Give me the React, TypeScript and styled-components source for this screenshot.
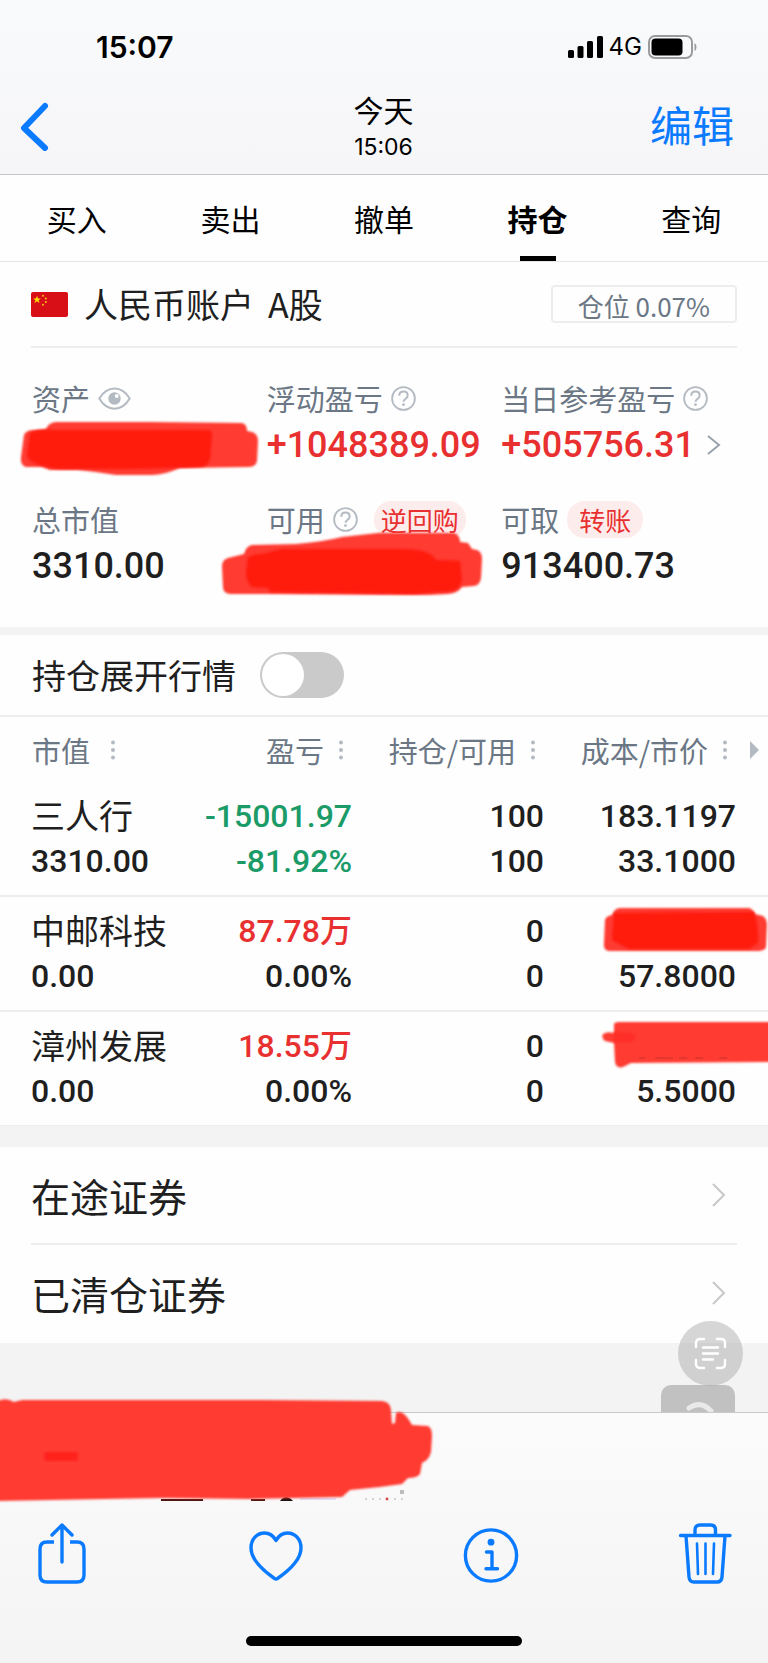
import React from 'react';
import styled, { createGlobalStyle } from 'styled-components';

const cjk = '"Noto Sans CJK SC", sans-serif';
const numeric = 'Roboto, "Noto Sans CJK SC", sans-serif';
const system = 'Inter, "Noto Sans CJK SC", sans-serif';

const color = {
  ink: '#1f1f1f',
  muted: '#6b7785',
  faint: '#b4bac2',
  line: '#ededee',
  band: '#f3f3f3',
  rise: '#e93030',
  fall: '#1b9b68',
  blue: '#0a7aff',
};

type Tone = 'ink' | 'rise' | 'fall';

const GlobalStyle = createGlobalStyle`
  * { box-sizing: border-box; }
  body { margin: 0; background: #fff; color: ${color.ink}; font-family: ${cjk}; }
  button { border: 0; margin: 0; padding: 0; background: none; color: inherit; font: inherit; cursor: pointer; }
  svg { display: block; }
`;

const Page = styled.div`
  display: flex;
  flex-direction: column;
  min-height: 100vh;
  overflow: hidden;
  background: #fefefe;
`;

/* ---------- header ---------- */

const Header = styled.header`
  background: linear-gradient(#f9fafc, #f6f6f8);
  border-bottom: 1px solid #c4c5c8;
  color: #000;
  font-family: ${system};
`;

const StatusBar = styled.div`
  display: flex;
  justify-content: space-between;
  align-items: center;
  padding: 31px 71px 12px 96px;
  line-height: 32px;
`;

const Clock = styled.span`
  font-size: 30px;
  font-weight: 600;
`;

const Signals = styled.div`
  display: flex;
  align-items: center;
  gap: 6px;
  font-size: 24px;
`;

const NavBar = styled.div`
  display: grid;
  grid-template-columns: 1fr auto 1fr;
  align-items: center;
  padding: 18px 34px 15px 19px;
`;

const BackButton = styled.button`
  justify-self: start;
`;

const EditButton = styled.button`
  justify-self: end;
  padding-top: 2px;
  color: ${color.blue};
  font-size: 42px;
  line-height: 48px;
`;

const NavTitle = styled.div`
  display: flex;
  flex-direction: column;
  align-items: center;
  gap: 6px;
  padding-left: 14px;
`;

const Day = styled.h1`
  margin: 0;
  font-size: 30px;
  font-weight: 400;
  line-height: 36px;
`;

const Time = styled.span`
  font-size: 23px;
  line-height: 24px;
`;

/* ---------- tabs ---------- */

const Tabs = styled.nav`
  display: grid;
  grid-template-columns: repeat(5, 1fr);
  border-bottom: 1px solid #e4e5e6;
`;

const Tab = styled.button<{ $active?: boolean }>`
  position: relative;
  padding: 25px 0;
  color: #000;
  font-size: 30px;
  font-weight: ${(p) => (p.$active ? 700 : 400)};
  line-height: 36px;

  &::after {
    content: '';
    display: ${(p) => (p.$active ? 'block' : 'none')};
    position: absolute;
    bottom: 0;
    left: 50%;
    width: 36px;
    height: 5px;
    margin-left: -18px;
    background: #000;
  }
`;

/* ---------- account ---------- */

const AccountHead = styled.section`
  display: flex;
  align-items: center;
  margin: 0 31px;
  padding: 23px 0;
  border-bottom: 2px solid ${color.line};
`;

const AccountName = styled.h2`
  display: flex;
  flex: 1;
  gap: 14px;
  margin: 0 0 0 16px;
  font-size: 34px;
  font-weight: 400;
  line-height: 38px;
`;

const PositionButton = styled.button`
  padding: 3px 25px 0;
  border: 2px solid ${color.line};
  border-radius: 4px;
  color: ${color.muted};
  font-size: 26px;
  line-height: 31px;
`;

const Summary = styled.dl`
  display: grid;
  grid-template-columns: repeat(3, 1fr);
  row-gap: 38px;
  margin: 0;
  padding: 34px 32px 41px;
`;

const Metric = styled.div`
  position: relative;
  display: flex;
  flex-direction: column;
  gap: 11px;
  min-width: 0;
`;

const MetricLabel = styled.dt`
  display: flex;
  align-items: center;
  gap: 8px;
  height: 32px;
  color: ${color.muted};
  font-size: 29px;
  line-height: 32px;
  white-space: nowrap;
`;

const MetricValue = styled.dd<{ $tone?: Tone }>`
  display: flex;
  align-items: center;
  gap: 12px;
  height: 40px;
  margin: 0;
  color: ${(p) => color[p.$tone ?? 'ink']};
  font-family: ${numeric};
  font-size: 36px;
  font-weight: 500;
  line-height: 40px;
  white-space: nowrap;
`;

const Pill = styled.button<{ $tight?: boolean }>`
  padding: 0 ${(p) => (p.$tight ? 7 : 12)}px;
  margin-left: ${(p) => (p.$tight ? 8 : 0)}px;
  border-radius: 18px;
  background: #fdecec;
  color: ${color.rise};
  font-size: 26px;
  line-height: 37px;
`;

const Mark = styled.svg<{ $x: number; $y: number }>`
  position: absolute;
  left: ${(p) => p.$x}px;
  top: ${(p) => p.$y}px;
  overflow: visible;
  pointer-events: none;
`;

/* ---------- holdings ---------- */

const Band = styled.div<{ $size: number }>`
  height: ${(p) => p.$size}px;
  background: ${color.band};
`;

const ExpandRow = styled.label`
  display: flex;
  align-items: center;
  gap: 24px;
  padding: 17px 32px;
  border-bottom: 2px solid ${color.line};
  font-size: 34px;
  line-height: 46px;
`;

const Switch = styled.input`
  appearance: none;
  width: 84px;
  height: 46px;
  margin: 0;
  padding: 2px;
  border-radius: 23px;
  background: #cacaca;

  &::before {
    content: '';
    display: block;
    width: 42px;
    height: 42px;
    border-radius: 50%;
    background: #fff;
  }

  &:checked::before {
    margin-left: 38px;
  }
`;

const Holdings = styled.table`
  width: 100%;
  border-collapse: separate;
  border-spacing: 0;
  table-layout: fixed;
`;

const HeadCell = styled.th<{ $first?: boolean }>`
  height: 65px;
  padding: 0 ${(p) => (p.$first ? 0 : 9)}px 0 ${(p) => (p.$first ? 32 : 0)}px;
  color: ${color.muted};
  font-size: 29px;
  font-weight: 400;
  line-height: 32px;
`;

const HeadLabel = styled.span<{ $first?: boolean }>`
  display: flex;
  align-items: center;
  justify-content: ${(p) => (p.$first ? 'flex-start' : 'flex-end')};
  gap: ${(p) => (p.$first ? 21 : 15)}px;
  white-space: nowrap;
`;

const Cell = styled.td<{ $first?: boolean }>`
  position: relative;
  padding: 12px 0 11px ${(p) => (p.$first ? 31 : 0)}px;
  border-bottom: 2px solid ${color.line};
  font-family: ${numeric};
  font-size: 32px;
  font-weight: 500;
  text-align: ${(p) => (p.$first ? 'left' : 'right')};

  tr:last-child > & {
    border-bottom-width: 1px;
  }
`;

const Line = styled.div<{ $tone?: Tone }>`
  height: 45px;
  color: ${(p) => color[p.$tone ?? 'ink']};
  line-height: 45px;
  white-space: nowrap;
`;

const StockName = styled(Line)`
  font-family: ${cjk};
  font-size: 34px;
  font-weight: 400;
  line-height: 42px;
`;

/* ---------- links ---------- */

const LinkRow = styled.a`
  display: flex;
  align-items: center;
  justify-content: space-between;
  margin: 0 31px;
  padding: 24px 11px 24px 0;
  color: ${color.ink};
  font-size: 39px;
  line-height: 48px;
  text-decoration: none;

  & + & {
    padding-bottom: 26px;
    border-top: 2px solid ${color.line};
  }
`;

const Tail = styled.div`
  position: relative;
  flex: 1;
  min-height: 68px;
  background: ${color.band};
`;

const ScanButton = styled.button`
  position: absolute;
  top: -22px;
  right: 25px;
  padding: 16px;
  border-radius: 50%;
  background: rgba(160, 160, 160, 0.42);
`;

const HiddenTab = styled.div`
  position: absolute;
  right: 33px;
  bottom: 0;
  width: 74px;
  height: 27px;
  overflow: hidden;
  border-radius: 10px 10px 0 0;
  background: #c1c1c1;
`;

/* ---------- toolbar ---------- */

const Toolbar = styled.footer`
  position: relative;
  padding: 110px 31px 17px;
  border-top: 1px solid #c8c8c8;
  background: linear-gradient(#fbfbfb, #f7f7f8 60%, #f4f4f5);
`;

const Actions = styled.div`
  display: flex;
  justify-content: space-between;
`;

const HomeBar = styled.div`
  width: 39%;
  height: 10px;
  margin: 52px auto 0;
  border-radius: 5px;
  background: #000;
`;

/* ---------- drawings ---------- */

const Help = () => (
  <svg width="25" height="25" viewBox="0 0 25 25" fill="none" stroke={color.faint} strokeWidth="1.8">
    <circle cx="12.5" cy="12.5" r="11.4" />
    <path d="M8.3 9.8c0-2.5 1.8-4.2 4.2-4.2s4.2 1.6 4.2 3.9c0 3.2-4.2 3.2-4.2 6.3" strokeWidth="2" />
    <circle cx="12.5" cy="18.6" r="1.4" fill={color.faint} stroke="none" />
  </svg>
);

const Eye = () => (
  <svg width="33" height="23" viewBox="0 0 33 23" fill="none">
    <path d="M1.3 11.5C9-2 24-2 31.7 11.5 24 25 9 25 1.3 11.5z" stroke={color.faint} strokeWidth="2" />
    <circle cx="16.5" cy="11.5" r="6.2" fill={color.faint} />
    <circle cx="18.8" cy="9" r="2" fill="#fefefe" />
  </svg>
);

const Chevron = ({ w, h, stroke, thick }: { w: number; h: number; stroke: string; thick: number }) => (
  <svg width={w} height={h} viewBox={`0 0 ${w} ${h}`} fill="none" stroke={stroke} strokeWidth={thick}>
    <path d={`M1 1L${w - 2} ${h / 2}L1 ${h - 1}`} />
  </svg>
);

const Dots = () => (
  <svg width="4" height="20" viewBox="0 0 4 20" fill={color.faint}>
    <circle cx="2" cy="2.5" r="2" />
    <circle cx="2" cy="10" r="2" />
    <circle cx="2" cy="17.5" r="2" />
  </svg>
);

const Flag = () => (
  <svg width="37" height="25" viewBox="0 0 37 25">
    <rect width="37" height="25" rx="2" fill="#d80f17" />
    <path d="M6 3.8l1 2.7h2.9L7.6 8.2l.9 2.8L6 9.3 3.5 11l.9-2.8L2.1 6.5H5z" fill="#ffe100" />
    <g fill="#f5c518">
      <circle cx="12" cy="3.8" r="1" />
      <circle cx="14.8" cy="6.5" r="1" />
      <circle cx="14.8" cy="10" r="1" />
      <circle cx="12" cy="12.8" r="1" />
    </g>
  </svg>
);

const soft = { filter: 'url(#soft)' };

const BlurDefs = () => (
  <svg width="0" height="0" style={{ position: 'absolute' }} aria-hidden="true">
    <filter id="soft" x="-5%" y="-10%" width="110%" height="120%">
      <feGaussianBlur stdDeviation="1.1" />
    </filter>
  </svg>
);

const AssetMark = () => (
  <Mark $x={-12} $y={39} width="240" height="56" viewBox="0 0 240 56" aria-hidden="true">
    <path {...soft} d="M26 8Q28 2 36 1L130 1 222 2Q227 3 227 10L232 11Q238 13 238 20L237 40Q236 46 228 46L160 47Q144 54 132 54L96 54Q70 50 58 49L30 49 22 46 6 46Q0 44 1 36L4 14Q6 9 14 9z" fill="#ff3b30" />
    <path {...soft} d="M10 12Q18 8 34 9L188 9Q193 10 192 16L190 38Q188 45 180 46L110 48 40 48Q8 44 7 34z" fill="#ff1a0e" />
  </Mark>
);

const AvailableMark = () => (
  <Mark $x={-45} $y={29} width="262" height="66" viewBox="0 0 262 66" aria-hidden="true">
    <path {...soft} d="M0 34Q0 28 6 26L22 22Q24 14 30 13L74 12Q100 10 120 5L156 1 232 1Q238 3 238 10L246 11 250 17 255 18Q260 20 260 27L259 46Q258 53 252 54L240 55Q236 61 226 62L206 63 44 62 8 62Q1 61 1 55z" fill="#ff3b30" />
    <path {...soft} d="M60 17L180 17Q208 17 214 28L238 29 240 48Q238 58 228 59L190 62 48 60 46 56 30 55Q24 50 24 40L26 26Q30 22 40 22z" fill="#ff1a0e" />
  </Mark>
);

const CostMark = () => (
  <Mark $x={61} $y={10} width="163" height="46" viewBox="0 0 163 46" aria-hidden="true">
    <path {...soft} d="M8 6Q10 1 16 1L144 1Q148 2 150 7L158 9Q162 12 162 18L161 40Q160 44 152 44L4 44Q-2 43 -1 36L0 13Q1 9 7 8z" fill="#ff3b30" />
    <path {...soft} d="M9 6L149 5Q154 20 153 36L144 42 24 42 7 33z" fill="#ff1a0e" />
  </Mark>
);

const SecondCostMark = () => (
  <Mark $x={57} $y={8} width="170" height="50" viewBox="0 0 170 50" aria-hidden="true">
    <path {...soft} d="M13 4Q14 2 18 2L172 2 172 42 30 43 22 47Q15 49 14 42L13 23 4 21Q0 18 2 14 6 11 13 13z" fill="#ff3b30" />
    <path {...soft} d="M13 12L30 13Q36 14 34 20 28 24 13 22z" fill="#ff2f25" />
    <path d="M38 38h6M54 38h18M78 38h8M94 38h8M118 38h8" stroke="#e2372f" strokeWidth="2" />
  </Mark>
);

const FooterMark = () => (
  <Mark $x={0} $y={-31} width="440" height="122" viewBox="0 0 440 122" aria-hidden="true">
    <path d="M161 117h42v2h-42zM251 117h14v2h-14z" fill="#4a1512" />
    <path d="M280 119q6-8 13 0z" fill="#17110f" />
    <path d="M300 117h36" stroke="#e3def8" strokeWidth="2" />
    <rect x="400" y="108" width="4" height="4" fill="#bdbdbd" />
    <g fill="#c9c4c4">
      <circle cx="366" cy="117" r="1" />
      <circle cx="373" cy="117" r="1" />
      <circle cx="380" cy="117" r="1" />
      <circle cx="387" cy="117" r="1.4" fill="#d84545" />
      <circle cx="395" cy="117" r="1" />
      <circle cx="402" cy="117" r="1" />
    </g>
    <path {...soft} d="M-5 21Q4 14 14 20L22 18 260 18 382 19Q391 20 391 29L392 42 395 41 396 31Q402 27 409 38L412 43 428 44Q432 46 432 54L431 70Q429 78 422 81L420 92Q417 96 408 96L402 102 380 105 350 108 342 115 250 117 160 116 -5 119z" fill="#ff3b32" />
    <rect {...soft} x="44" y="70" width="34" height="9" rx="4" fill="#ff241c" />
  </Mark>
);

const ShareIcon = () => (
  <svg width="62" height="61" viewBox="0 0 62 61" fill="none" stroke={color.blue} strokeWidth="3.4" strokeLinecap="round" strokeLinejoin="round">
    <path d="M31 39V2M21 12L31 2l10 10" />
    <path d="M23 19h-7q-7 0-7 7v26q0 7 7 7h30q7 0 7-7V26q0-7-7-7h-7" strokeLinecap="butt" />
  </svg>
);

const HeartIcon = () => (
  <svg width="62" height="61" viewBox="0 0 62 61" fill="none" stroke={color.blue} strokeWidth="3.4" strokeLinejoin="round">
    <path d="M30 17.5C27.500 13 24 10 18.500 10 11 10 5 16.200 5 25 5 37 17 47.500 28.500 55.500q1.500 1 3 0C43 47.500 55 37 55 25 55 16.200 49 10 41.500 10 36 10 32.500 13 30 17.500z" />
  </svg>
);

const InfoIcon = () => (
  <svg width="62" height="61" viewBox="0 0 62 61" fill="none" stroke={color.blue} strokeWidth="3.4" strokeLinecap="round" strokeLinejoin="round">
    <circle cx="31" cy="32.5" r="25.6" />
    <circle cx="31" cy="19.2" r="3.4" fill={color.blue} stroke="none" />
    <path d="M26.5 29h5.5v16.500M26 45.700h11.500" />
  </svg>
);

const TrashIcon = () => (
  <svg width="62" height="61" viewBox="0 0 62 61" fill="none" stroke={color.blue} strokeWidth="3.4" strokeLinecap="round" strokeLinejoin="round">
    <path d="M5.500 12.500h49.500M20 12V7q0-5 5-5h10.500q5 0 5 5v5M11 13l3 41q.4 5 5 5h23q4.600 0 5-5l3-41" />
    <path d="M22 20.500l1 30.500M30.500 20.500v30.500M39 20.500l-1 30.500" strokeWidth="2.6" />
  </svg>
);

const ScanIcon = () => (
  <svg width="33" height="33" viewBox="0 0 33 33" fill="none" stroke="#fff" strokeWidth="2.4" strokeLinecap="round">
    <path d="M2 10V6q0-4 4-4h4M23 2h4q4 0 4 4v4M31 23v4q0 4-4 4h-4M10 31H6q-4 0-4-4v-4M9 10.500h15M9 16.500h15M9 22.500h10" />
  </svg>
);

/* ---------- data ---------- */

const tabs = ['买入', '卖出', '撤单', '持仓', '查询'];

interface Holding {
  name: string;
  value: string;
  profit: string;
  rate: string;
  tone: Tone;
  rateTone: Tone;
  held: string;
  price: string;
  cost: React.ReactNode;
  mark?: React.ReactNode;
}

const holdings: Holding[] = [
  { name: '三人行', value: '3310.00', profit: '-15001.97', rate: '-81.92%', tone: 'fall', rateTone: 'fall', held: '100', cost: '183.1197', price: '33.1000' },
  { name: '中邮科技', value: '0.00', profit: '87.78万', rate: '0.00%', tone: 'rise', rateTone: 'ink', held: '0', cost: null, price: '57.8000', mark: <CostMark /> },
  { name: '漳州发展', value: '0.00', profit: '18.55万', rate: '0.00%', tone: 'rise', rateTone: 'ink', held: '0', cost: null, price: '5.5000', mark: <SecondCostMark /> },
];

const actions = [
  { label: '分享', icon: <ShareIcon /> },
  { label: '收藏', icon: <HeartIcon /> },
  { label: '信息', icon: <InfoIcon /> },
  { label: '删除', icon: <TrashIcon /> },
];

export default function App() {
  return (
    <Page>
      <GlobalStyle />
      <BlurDefs />
      <Header>
        <StatusBar>
          <Clock>15:07</Clock>
          <Signals>
            <svg width="35" height="22" viewBox="0 0 35 22">
              <rect x="0" y="14" width="6" height="8" rx="1.5" />
              <rect x="9.5" y="10" width="6" height="12" rx="1.5" />
              <rect x="19" y="5" width="6" height="17" rx="1.5" />
              <rect x="29" y="0" width="6" height="22" rx="1.5" />
            </svg>
            4G
            <svg width="49" height="24" viewBox="0 0 49 24">
              <rect x="1" y="1" width="43" height="22" rx="6" fill="none" stroke="#9a9b9d" strokeWidth="2" />
              <rect x="3.5" y="3.5" width="31" height="17" rx="4" />
              <path d="M46.500 8q2 1 2 4t-2 4z" fill="#9a9b9d" />
            </svg>
          </Signals>
        </StatusBar>
        <NavBar>
          <BackButton aria-label="返回">
            <svg width="30" height="50" viewBox="0 0 30 50" fill="none" stroke={color.blue} strokeWidth="6" strokeLinecap="round" strokeLinejoin="round">
              <path d="M26 5L5 27l21 20" />
            </svg>
          </BackButton>
          <NavTitle>
            <Day>今天</Day>
            <Time>15:06</Time>
          </NavTitle>
          <EditButton>编辑</EditButton>
        </NavBar>
      </Header>

      <Tabs>
        {tabs.map((t) => (
          <Tab key={t} $active={t === '持仓'}>{t}</Tab>
        ))}
      </Tabs>

      <AccountHead>
        <Flag />
        <AccountName>
          <span>人民币账户</span>
          <span>A股</span>
        </AccountName>
        <PositionButton>仓位 0.07%</PositionButton>
      </AccountHead>

      <Summary>
        <Metric>
          <MetricLabel>资产<Eye /></MetricLabel>
          <MetricValue />
          <AssetMark />
        </Metric>
        <Metric>
          <MetricLabel>浮动盈亏<Help /></MetricLabel>
          <MetricValue $tone="rise">+1048389.09</MetricValue>
        </Metric>
        <Metric>
          <MetricLabel>当日参考盈亏<Help /></MetricLabel>
          <MetricValue $tone="rise">
            +505756.31
            <Chevron w={14} h={20} stroke="#9aa2ad" thick={2} />
          </MetricValue>
        </Metric>
        <Metric>
          <MetricLabel>总市值</MetricLabel>
          <MetricValue>3310.00</MetricValue>
        </Metric>
        <Metric>
          <MetricLabel>可用<Help /><Pill $tight>逆回购</Pill></MetricLabel>
          <MetricValue />
          <AvailableMark />
        </Metric>
        <Metric>
          <MetricLabel>可取<Pill>转账</Pill></MetricLabel>
          <MetricValue>913400.73</MetricValue>
        </Metric>
      </Summary>

      <Band $size={8} />

      <ExpandRow>
        持仓展开行情
        <Switch type="checkbox" role="switch" />
      </ExpandRow>

      <Holdings>
        <colgroup>
          <col style={{ width: '22%' }} />
          <col />
          <col style={{ width: '25%' }} />
          <col style={{ width: '25%' }} />
          <col style={{ width: '32px' }} />
        </colgroup>
        <thead>
          <tr>
            <HeadCell $first><HeadLabel $first>市值<Dots /></HeadLabel></HeadCell>
            {['盈亏', '持仓/可用', '成本/市价'].map((h) => (
              <HeadCell key={h}><HeadLabel>{h}<Dots /></HeadLabel></HeadCell>
            ))}
            <HeadCell>
              <HeadLabel>
                <svg width="9" height="18" viewBox="0 0 9 18"><path d="M0 0l9 9-9 9z" fill={color.faint} /></svg>
              </HeadLabel>
            </HeadCell>
          </tr>
        </thead>
        <tbody>
          {holdings.map((h) => (
            <tr key={h.name}>
              <Cell $first>
                <StockName>{h.name}</StockName>
                <Line>{h.value}</Line>
              </Cell>
              <Cell>
                <Line $tone={h.tone}>{h.profit}</Line>
                <Line $tone={h.rateTone}>{h.rate}</Line>
              </Cell>
              <Cell>
                <Line>{h.held}</Line>
                <Line>{h.held}</Line>
              </Cell>
              <Cell>
                <Line>{h.cost}</Line>
                <Line>{h.price}</Line>
                {h.mark}
              </Cell>
              <Cell />
            </tr>
          ))}
        </tbody>
      </Holdings>

      <Band $size={21} />

      <LinkRow href="#transit">在途证券<Chevron w={14} h={24} stroke="#c8c8c8" thick={2} /></LinkRow>
      <LinkRow href="#closed">已清仓证券<Chevron w={14} h={24} stroke="#c8c8c8" thick={2} /></LinkRow>

      <Tail>
        <HiddenTab>
          <svg width="74" height="27" viewBox="0 0 74 27" fill="none" stroke="#e9e9e9" strokeWidth="5" strokeLinecap="round">
            <path d="M28 23Q40 15 50 26" />
          </svg>
        </HiddenTab>
        <ScanButton aria-label="识别文字"><ScanIcon /></ScanButton>
      </Tail>

      <Toolbar>
        <FooterMark />
        <Actions>
          {actions.map((a) => (
            <button key={a.label} aria-label={a.label}>{a.icon}</button>
          ))}
        </Actions>
        <HomeBar />
      </Toolbar>
    </Page>
  );
}
